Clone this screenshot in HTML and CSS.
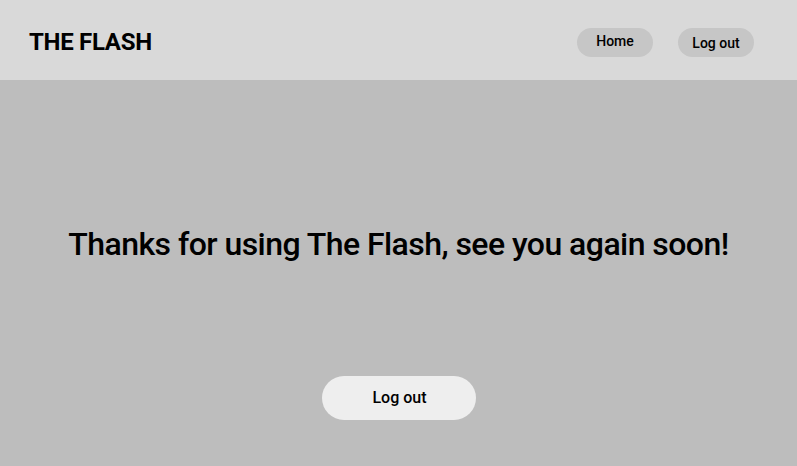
FILE: index.html
```html
<!DOCTYPE html>
<html lang="en">
<head>
<meta charset="utf-8">
<title>The Flash</title>
<link rel="stylesheet" href="styles.css">
</head>
<body>
<header class="topbar">
  <div class="brand">THE FLASH</div>
  <nav class="nav">
    <a class="nav-btn nav-home" href="#">Home</a>
    <a class="nav-btn nav-logout" href="#">Log out</a>
  </nav>
</header>
<main class="content">
  <h1 class="message">Thanks for using The Flash, see you again soon!</h1>
  <button class="logout-btn" type="button">Log out</button>
</main>
</body>
</html>
```

FILE: styles.css
```css
* { box-sizing: border-box; }
html, body { margin: 0; padding: 0; height: 100%; }
body {
  font-family: Roboto, "Liberation Sans", sans-serif;
  color: #000;
  background: #bdbdbd;
  display: flex;
  flex-direction: column;
}
.topbar {
  height: 80px;
  background: #d9d9d9;
  display: flex;
  align-items: center;
  justify-content: space-between;
  padding: 0 43px 0 29px;
  flex-shrink: 0;
}
.brand {
  font-size: 24px;
  font-weight: 700;
  letter-spacing: -0.3px;
  padding-top: 3px;
}
.nav {
  display: flex;
  gap: 25px;
  align-items: center;
  margin-top: 5px;
}
.nav-btn {
  width: 76px;
  height: 29px;
  border-radius: 15px;
  background: #c6c6c6;
  color: #000;
  text-decoration: none;
  font-size: 14px;
  font-weight: 500;
  display: flex;
  align-items: center;
  justify-content: center;
}
.nav-home { padding-bottom: 3px; }
.nav-logout { padding-top: 1px; }
.content {
  flex: 1;
  display: flex;
  flex-direction: column;
  align-items: center;
  padding-top: 145px;
}
.message {
  margin: 0;
  font-size: 32px;
  font-weight: 500;
  letter-spacing: -0.55px;
  line-height: normal;
}
.logout-btn {
  margin-top: 113px;
  width: 154px;
  height: 44px;
  border: none;
  border-radius: 22px;
  background: #eeeeee;
  font-family: inherit;
  font-size: 16px;
  font-weight: 500;
  color: #000;
  padding: 0 0 2px 2px;
}
```
